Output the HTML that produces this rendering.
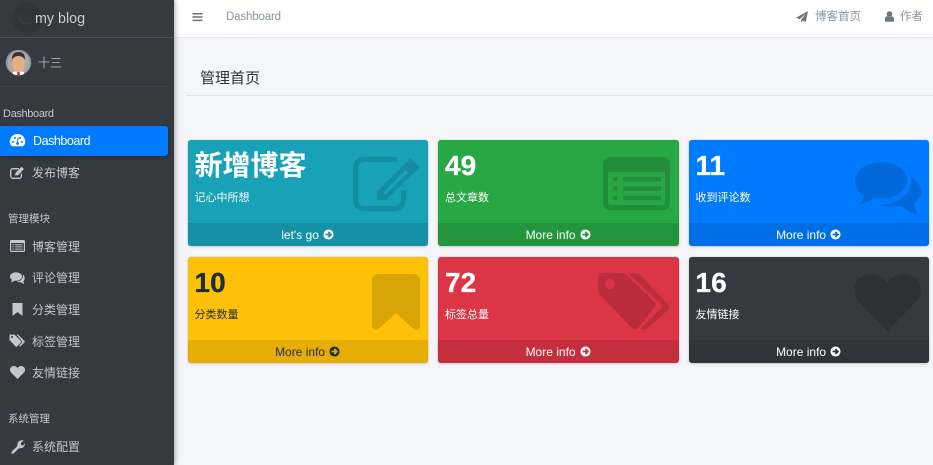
<!DOCTYPE html>
<html lang="zh"><head><meta charset="utf-8"><title>my blog</title>
<style>
*{box-sizing:border-box}
html,body{margin:0;padding:0;width:933px;height:465px;overflow:hidden;background:#f4f6f9;font-family:"Liberation Sans","Noto Sans CJK SC",sans-serif}
.a{position:absolute;white-space:nowrap;line-height:1}
svg{position:absolute;display:block;overflow:visible}
#side{position:absolute;z-index:2;left:0;top:0;width:174px;height:465px;background:#343a40;box-shadow:1px 0 5px rgba(0,0,0,.35)}
#top{position:absolute;left:174px;top:0;width:759px;height:38px;background:#fff;border-bottom:1px solid #e6e8ee}
.m{color:#c2c7d0;font-size:12px}
.h{color:#c2c7d0;font-size:10.5px}
.card{position:absolute;width:240.5px;height:106px;border-radius:3px;overflow:hidden;box-shadow:0 0 1px rgba(0,0,0,.25),0 1px 3px rgba(0,0,0,.15)}
.ft{position:absolute;left:0;right:0;bottom:0;height:23px;background:rgba(0,0,0,.1);text-align:center;font-size:12px;line-height:25px}
.ft svg{position:static;display:inline-block;vertical-align:-1px;margin-left:1px}
.n{position:absolute;left:7px;top:10px;font-size:28px;font-weight:bold;line-height:32px;-webkit-text-stroke:.3px currentColor}
.l{position:absolute;left:7px;top:51px;font-size:11px;line-height:14px}
.w{color:#fff}.d{color:#1f2d3d}
.ic{fill:rgba(0,0,0,.15)}
</style></head><body>
<svg width="0" height="0" style="position:absolute"><defs>
<symbol id="go" viewBox="0 0 12 12"><circle cx="6" cy="6" r="5.5" fill="currentColor"/><path d="M2.8 6h5.6M5.8 3.2 8.6 6 5.8 8.8" fill="none" stroke="var(--b)" stroke-width="1.9"/></symbol>
</defs></svg>

<div id="side">
  <svg style="left:9px;top:0" width="36" height="36" viewBox="0 0 36 36"><circle cx="18" cy="18" r="15" fill="#2f3338" opacity=".65"/><path d="M9 14a10 10 0 0 0 15 8" fill="none" stroke="#3a3f45" stroke-width="1.500"/></svg>
  <div class="a" style="left:35px;top:11.500px;font-size:14.3px;color:#c9cdd3">my blog</div>
  <div style="position:absolute;left:0;top:37px;width:174px;height:1px;background:#4b545c"></div>

  <svg style="left:5px;top:49px" width="27" height="27" viewBox="0 0 27 27"><defs><clipPath id="av"><circle cx="13.500" cy="13.500" r="12.800"/></clipPath></defs><g clip-path="url(#av)"><rect width="27" height="27" fill="#8f9296"/><ellipse cx="13.500" cy="14" rx="11" ry="12" fill="#a8aaad"/><path d="M8 27v-4l5.500-1.500L19 23v4z" fill="#fff"/><path d="M12.500 23h2l.5 4h-3z" fill="#c8202f"/><path d="M7.500 7h12v9q0 7-6 7t-6-7z" fill="#e8ad80"/><path d="M7 11Q6.500 3 13.500 3T20 11q-2-4-6.500-4T7 11z" fill="#3a3230"/></g></svg>
  <div class="a" style="left:38px;top:57px;font-size:12px;color:#aab0b8">十三</div>
  <div style="position:absolute;left:0;top:86px;width:168px;height:1px;background:#3f454c"></div>

  <div class="a h" style="left:3px;top:108px;letter-spacing:-.35px;font-size:11px;line-height:12px">Dashboard</div>
  <div style="position:absolute;left:0;top:126px;width:168px;height:30px;background:#007bff;border-radius:0 3px 3px 0;box-shadow:0 1px 3px rgba(0,0,0,.3)"></div>
  <svg style="left:10px;top:134px" width="15" height="13" viewBox="0 0 15 13"><path d="M7.500 0A7.500 7.500 0 0 0 1.600 12.300h11.800A7.500 7.500 0 0 0 7.500 0z" fill="#fff"/><g fill="#007bff"><circle cx="3" cy="8" r="1"/><circle cx="5" cy="4" r="1"/><circle cx="10" cy="4" r="1"/><circle cx="12" cy="8" r="1"/><circle cx="7.500" cy="9.500" r="1.400"/></g><path d="M7.200 9 8.300 3.500" stroke="#007bff"/></svg>
  <div class="a" style="left:33px;top:135px;font-size:12.500px;color:#fff;letter-spacing:-.45px">Dashboard</div>

  <svg style="left:10px;top:166px" width="15" height="13" viewBox="0 0 15 13"><path d="M9 2.700H3a2.200 2.200 0 0 0-2.300 2.200v5.200A2.200 2.200 0 0 0 3 12.300h6.200a2.200 2.200 0 0 0 2.200-2.200V7.500" fill="none" stroke="#c2c7d0" stroke-width="1.300"/><path d="M5 9.500 5.500 7 11.500.8 14 3 8 9.200z" fill="#c2c7d0"/></svg>
  <div class="a m" style="left:32px;top:167px">发布博客</div>

  <div class="a h" style="left:8px;top:214px">管理模块</div>

  <svg style="left:10px;top:240px" width="15" height="12" viewBox="0 0 15 12"><rect width="15" height="12" rx="1.500" fill="#c2c7d0"/><rect x="1.200" y="3" width="12.600" height="7.800" fill="#343a40"/><path d="M2.500 4.200h1.500v1H2.500zM5 4.200h7.500v1H5zM2.500 6.400h1.500v1H2.500zM5 6.400h7.500v1H5zM2.500 8.600h1.500v1H2.500zM5 8.600h7.500v1H5z" fill="#c2c7d0"/></svg>
  <div class="a m" style="left:32px;top:241px">博客管理</div>

  <svg style="left:10px;top:272px" width="15" height="13" viewBox="0 0 15 13"><ellipse cx="6" cy="4.500" rx="6" ry="4.300" fill="#c2c7d0"/><path d="M2 7 1.200 10.500 5 8.500z" fill="#c2c7d0"/><path d="M12.800 2.500C14.500 4 15 5.500 14.600 7c-.3 1.200-.8 1.800-1.300 2.200l.9 3-3.600-2C9 10.300 7.500 10 6.500 9.500c3.500 0 7-2.300 6.300-7z" fill="#c2c7d0"/></svg>
  <div class="a m" style="left:32px;top:272px">评论管理</div>

  <svg style="left:12px;top:303px" width="11" height="13" viewBox="0 0 11 13"><path d="M.500 0h10v13L5.500 9 .500 13z" fill="#c2c7d0"/></svg>
  <div class="a m" style="left:32px;top:304px">分类管理</div>

  <svg style="left:9px;top:334px" width="16" height="13" viewBox="0 0 16 13"><path d="M.500.500h5L12 7a1 1 0 0 1 0 1.400L8 12.500a1 1 0 0 1-1.400 0L.500 6zM3 2a1 1 0 1 0 .01 0z" fill="#c2c7d0" fill-rule="evenodd"/><path d="M7.500.500h1.500L15.500 7a1 1 0 0 1 0 1.400L11 12.800l-1-1L13.500 7.800z" fill="#c2c7d0"/></svg>
  <div class="a m" style="left:32px;top:336px">标签管理</div>

  <svg style="left:10px;top:366px" width="15" height="13" viewBox="0 0 15 13"><path d="M7.500 13 1 6.500C-1.500 3.500.8 0 3.800 0c1.700 0 2.900.9 3.700 2C8.300.9 9.500 0 11.200 0c3 0 5.300 3.500 2.800 6.500z" fill="#c2c7d0"/></svg>
  <div class="a m" style="left:32px;top:367px">友情链接</div>

  <div class="a h" style="left:8px;top:414px">系统管理</div>

  <svg style="left:11px;top:440px" width="14" height="14" viewBox="0 0 14 14"><path d="M.8 11.500 6.500 6C5.800 3 7.800.300 11 .300c.7 0 1.200.1 1.700.4L9.800 3l.4 2 2 .5L14 3c.3 3.500-2.800 6-6 5.300l-5.500 5.200a1.200 1.200 0 0 1-1.700-2z" fill="#c2c7d0"/></svg>
  <div class="a m" style="left:32px;top:441px">系统配置</div>
</div>

<div id="top">
  <svg style="left:18px;top:12px" width="11" height="10" viewBox="0 0 11 10"><path d="M.500 1h10v1.500H.500zM.500 4.300h10v1.500H.500zM.500 7.600h10v1.500H.500z" fill="#6c757d"/></svg>
  <div class="a" style="left:52px;top:12px;font-size:11.500px;color:#8b95a5;letter-spacing:-.15px">Dashboard</div>
  <svg style="left:622px;top:11px" width="12" height="12" viewBox="0 0 12 12"><path d="M12 0 9.800 11 6.700 9.600 5 11.800V9L10 2.500 3.600 8.200 0 6.700z" fill="#6c757d"/></svg>
  <div class="a" style="left:641px;top:12px;font-size:11.500px;color:#8b95a5">博客首页</div>
  <svg style="left:711px;top:11px" width="9" height="11" viewBox="0 0 9 11"><circle cx="4.500" cy="3" r="2.800" fill="#6c757d"/><path d="M0 10V8q0-2.500 2.200-2.800 2.300 1.200 4.600 0Q9 5.500 9 8v2q0 .7-1 .7H1q-1 0-1-.7z" fill="#6c757d"/></svg>
  <div class="a" style="left:726px;top:12px;font-size:11.500px;color:#8b95a5">作者</div>
</div>

<div class="a" style="left:200px;top:71px;font-size:15px;color:#2b3238">管理首页</div>
<div style="position:absolute;left:186px;top:95px;width:747px;height:1px;background:#dfe2e8"></div>

<!-- row 1 -->
<div class="card w" style="left:187.500px;top:140px;background:#17a2b8;--b:#148fa3">
  <div class="a" style="left:7px;top:10px;font-size:28px;font-weight:bold;line-height:32px">新增博客</div>
  <div class="l">记心中所想</div>
  <svg style="left:165px;top:17px" width="68" height="54" viewBox="0 0 68 54"><path d="M44 2.500H11A8.500 8.500 0 0 0 2.500 11V43A8.500 8.500 0 0 0 11 51.500H42A8.500 8.500 0 0 0 50.500 43V33" fill="none" stroke="rgba(0,0,0,.13)" stroke-width="5"/><path fill="rgba(0,0,0,.13)" fill-rule="evenodd" d="M24 43V34.500L57.500 1.300 67 10.300 33 43zM30 35.500 32.500 38 55 15.500 52.500 13z"/></svg>
  <div class="ft">let's go <svg width="11" height="11"><use href="#go" width="11" height="11"/></svg></div>
</div>
<div class="card w" style="left:438px;top:140px;background:#28a745;--b:#24963e">
  <div class="n">49</div><div class="l">总文章数</div>
  <svg style="left:165px;top:17px" width="67" height="53" viewBox="0 0 67 53"><path class="ic" fill-rule="evenodd" d="M7 0h53a7 7 0 0 1 7 7v39a7 7 0 0 1-7 7H7a7 7 0 0 1-7-7V7a7 7 0 0 1 7-7zM5 15v31a2 2 0 0 0 2 2h53a2 2 0 0 0 2-2V15z"/><circle class="ic" cx="12.500" cy="22" r="2.500"/><circle class="ic" cx="12.500" cy="31.500" r="2.500"/><circle class="ic" cx="12.500" cy="41" r="2.500"/><path class="ic" d="M20 20h38v4.500H20zM20 29.300h38v4.500H20zM20 38.800h38v4.500H20z"/></svg>
  <div class="ft">More info <svg width="11" height="11"><use href="#go" width="11" height="11"/></svg></div>
</div>
<div class="card w" style="left:688.500px;top:140px;background:#007bff;--b:#006fe6">
  <div class="n">11</div><div class="l">收到评论数</div>
  <svg style="left:165.500px;top:22px" width="67" height="53" viewBox="0 0 67 53"><path class="ic" d="M27 0C12 0 1 8.500 1 19c0 6 3.500 11 9 14.500C9.500 36.500 8 39.500 5 42.500c6-1 11-3.500 15-6.500 2.500.4 4.500.6 7 .6 15 0 26-8 26-18.600S42 0 27 0z"/><path class="ic" d="M57 14C64 19 67 25 67 30C67 36 62 40 60 41C60 45 62 49 64 52C57 51 52 48 48 44C40 45 30 45 24 43C40 42 60 36 57 14z"/></svg>
  <div class="ft">More info <svg width="11" height="11"><use href="#go" width="11" height="11"/></svg></div>
</div>

<!-- row 2 -->
<div class="card d" style="left:187.500px;top:257px;background:#ffc107;--b:#e6ae06">
  <div class="n">10</div><div class="l">分类数量</div>
  <svg style="left:184.500px;top:17px" width="48" height="56" viewBox="0 0 48 56"><path class="ic" d="M6 0h36a6 6 0 0 1 6 6v46a4 4 0 0 1-6.500 3L24 39 6.500 55A4 4 0 0 1 0 52V6a6 6 0 0 1 6-6z"/></svg>
  <div class="ft">More info <svg width="11" height="11"><use href="#go" width="11" height="11"/></svg></div>
</div>
<div class="card w" style="left:438px;top:257px;background:#dc3545;--b:#c6303e">
  <div class="n">72</div><div class="l">标签总量</div>
  <svg style="left:160px;top:16px" width="72" height="57" viewBox="0 0 72 57"><path class="ic" fill-rule="evenodd" d="M5 0H23Q27 0 30 3L56 29Q59 32 56 35L40 55Q37 58 34 55L3 23Q0 20 0 16V5A5 5 0 0 1 5 0zM12 6a5 5 0 1 0 .01 0z"/><path class="ic" d="M30 0h6Q40 0 43 3L70 31Q73 34 70 37L50 55Q47 58 42 56L63 35Q65 33 63 31z"/></svg>
  <div class="ft">More info <svg width="11" height="11"><use href="#go" width="11" height="11"/></svg></div>
</div>
<div class="card w" style="left:688.500px;top:257px;background:#343a40;--b:#2f353a">
  <div class="n">16</div><div class="l">友情链接</div>
  <svg style="left:165.500px;top:17px" width="67" height="57" viewBox="0 0 67 57"><path class="ic" d="M33.500 57 5 28C-6 15 3 0 17 0c7 0 12 3 16.500 9C38 3 43 0 50 0c14 0 23 15 12 28z"/></svg>
  <div class="ft">More info <svg width="11" height="11"><use href="#go" width="11" height="11"/></svg></div>
</div>
</body></html>
